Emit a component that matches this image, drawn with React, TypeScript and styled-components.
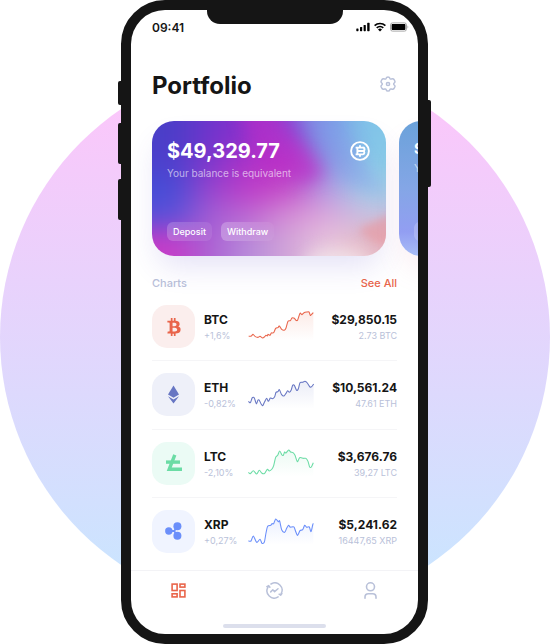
import React, { useId } from "react";
import styled, { createGlobalStyle } from "styled-components";
import { FaBtc } from "react-icons/fa";

const ink = "#151515";
const muted = "#b9c1d9";
const accent = "#e9654b";

const GlobalStyle = createGlobalStyle`
  *, *::before, *::after { box-sizing: border-box; }
  body {
    margin: 0;
    background: #fff;
    color: ${ink};
    font-family: Inter, "Liberation Sans", sans-serif;
  }
  h1, h2, p { margin: 0; }
  button {
    border: 0;
    padding: 0;
    background: none;
    color: inherit;
    font: inherit;
    cursor: pointer;
  }
`;

const Stage = styled.main`
  position: relative;
  display: flex;
  justify-content: center;
  padding-right: 1px;
  min-height: 100vh;
  overflow: hidden;
`;

const Backdrop = styled.div`
  position: absolute;
  left: 50%;
  top: 62px;
  width: 100%;
  max-width: 550px;
  aspect-ratio: 1;
  border-radius: 50%;
  transform: translateX(-50%);
  background: linear-gradient(180deg, #ffc4fa 0%, #c7e7ff 100%);
`;

const Phone = styled.div`
  position: relative;
  display: flex;
  width: 100%;
  max-width: 307px;
  border: 10px solid ${ink};
  border-radius: 44px;
  background: ${ink};
`;

const SideKey = styled.span<{ $side: "left" | "right"; $top: number; $length: number }>`
  position: absolute;
  ${(p) => p.$side}: -13px;
  top: ${(p) => p.$top}px;
  width: 4px;
  height: ${(p) => p.$length}px;
  border-radius: ${(p) => (p.$side === "left" ? "2px 0 0 2px" : "0 2px 2px 0")};
  background: ${ink};
`;

const Notch = styled.div`
  position: absolute;
  z-index: 2;
  top: -1px;
  left: 50%;
  width: 136px;
  height: 15px;
  margin-left: -68px;
  border-radius: 0 0 13px 13px;
  background: ${ink};
`;

const Screen = styled.div`
  display: flex;
  flex-direction: column;
  flex: 1;
  min-width: 0;
  overflow: hidden;
  border-radius: 34px;
  background: #fff;
`;

const StatusBar = styled.div`
  display: flex;
  align-items: center;
  justify-content: space-between;
  height: 34px;
  padding: 0 9px 0 21px;
  font-size: 12px;
  font-weight: 600;
`;

const StatusIcons = styled.div`
  display: flex;
  align-items: center;
  gap: 4px;
`;

const Header = styled.header`
  display: flex;
  align-items: center;
  justify-content: space-between;
  padding: 24px 22px 0 21px;
`;

const Title = styled.h1`
  font-size: 24px;
  line-height: 36px;
  font-weight: 700;
`;

const IconButton = styled.button`
  display: flex;
  margin-bottom: 4px;
  color: ${muted};
`;

const Cards = styled.section`
  display: flex;
  gap: 13px;
  padding: 17px 0 0 21px;
`;

const Card = styled.article<{ $shadow: string }>`
  position: relative;
  isolation: isolate;
  display: flex;
  flex: 0 0 234px;
  flex-direction: column;
  justify-content: space-between;
  min-height: 135px;
  padding: 16px 16px 15px 15px;
  border-radius: 22px;
  color: #fff;
  box-shadow: 0 16px 30px -6px ${(p) => p.$shadow};
`;

const CardArt = styled.svg`
  position: absolute;
  z-index: -1;
  inset: 0;
  width: 100%;
  height: 100%;
  border-radius: inherit;
`;

const CardTop = styled.div`
  display: flex;
  justify-content: space-between;
  align-items: flex-start;
`;

const Balance = styled.p<{ $compact?: boolean }>`
  font-size: ${(p) => (p.$compact ? 14 : 20)}px;
  line-height: ${(p) => (p.$compact ? 24 : 28)}px;
  font-weight: 700;
`;

const BalanceNote = styled.p<{ $compact?: boolean }>`
  font-size: 10px;
  line-height: ${(p) => (p.$compact ? 14 : 16)}px;
  color: rgba(255, 255, 255, 0.6);
`;

const CoinMark = styled.svg`
  flex: none;
  margin-top: 4px;
`;

const CardActions = styled.div`
  display: flex;
  gap: 9px;
`;

const Pill = styled.button<{ $strong?: boolean }>`
  height: 19px;
  padding: 0 6px;
  border-radius: 6px;
  background: ${(p) =>
    p.$strong
      ? "linear-gradient(90deg, rgba(255,255,255,0.26), rgba(255,255,255,0.04))"
      : "linear-gradient(90deg, rgba(255,255,255,0.2), rgba(255,255,255,0.08))"};
  color: #fff;
  font-size: 9px;
  font-weight: 500;
`;

const SectionHead = styled.div`
  display: flex;
  align-items: center;
  justify-content: space-between;
  padding: 19px 21px 0;
  line-height: 16px;
`;

const SectionTitle = styled.h2`
  color: ${muted};
  font-size: 11px;
  font-weight: 500;
`;

const SeeAll = styled.a`
  color: ${accent};
  font-size: 11px;
  font-weight: 500;
  text-decoration: none;
`;

const CoinList = styled.ul`
  display: grid;
  flex: 1;
  grid-auto-rows: 1fr;
  margin: 2px 21px 4px;
  padding: 0;
  list-style: none;
`;

const CoinRow = styled.li`
  display: grid;
  grid-template-columns: 43px 35px 66px 1fr;
  column-gap: 9px;
  align-items: center;
  border-bottom: 1px solid #f5f5f7;

  &:last-child {
    border-bottom-color: transparent;
  }
`;

const CoinTile = styled.span<{ $tint: string; $color: string }>`
  display: flex;
  align-items: center;
  justify-content: center;
  width: 43px;
  height: 43px;
  border-radius: 15px;
  background: ${(p) => p.$tint};
  color: ${(p) => p.$color};
`;

const CoinText = styled.div<{ $end?: boolean }>`
  white-space: nowrap;
  text-align: ${(p) => (p.$end ? "right" : "left")};
`;

const Strong = styled.p`
  font-size: 12px;
  line-height: 18px;
  font-weight: 700;
`;

const Sub = styled.p`
  color: ${muted};
  font-size: 9px;
  line-height: 13px;
`;

const Chart = styled.svg`
  display: block;
  width: 66px;
  height: 34px;
`;

const TabBar = styled.nav`
  display: grid;
  grid-template-columns: repeat(3, 1fr);
  height: 40px;
  border-top: 1px solid #f3f3f6;
`;

const Tab = styled.button<{ $active?: boolean }>`
  display: flex;
  align-items: center;
  justify-content: center;
  color: ${(p) => (p.$active ? accent : muted)};
`;

const HomeIndicator = styled.div`
  align-self: center;
  width: 103px;
  height: 4px;
  margin: 14px 0 6px;
  border-radius: 2px;
  background: #dcdfec;
`;

const SignalIcon = () => (
  <svg width="14" height="10" viewBox="0 0 14 10" aria-hidden="true">
    <rect x="0.3" y="6.4" width="2.2" height="2.8" rx="0.6" />
    <rect x="4" y="5" width="2.2" height="4.2" rx="0.6" />
    <rect x="7.6" y="3" width="2.2" height="6.2" rx="0.6" />
    <rect x="11.2" y="0.8" width="2.4" height="8.4" rx="0.6" />
  </svg>
);

const WifiIcon = () => (
  <svg width="12" height="10" viewBox="0 0 12 10" fill="none" stroke="#000" strokeWidth="1.6" aria-hidden="true">
    <path d="M0.6 3.7a7.8 7.8 0 0 1 10.8 0" />
    <path d="M2.7 5.9a4.8 4.8 0 0 1 6.6 0" />
    <path d="M6 9.4 4 7.4a2.8 2.8 0 0 1 4 0Z" fill="#000" stroke="none" />
  </svg>
);

const BatteryIcon = () => (
  <svg width="19" height="10" viewBox="0 0 19 10" aria-hidden="true">
    <rect x="0.5" y="0.9" width="16" height="8.2" rx="2" fill="none" stroke="#a8a8a8" />
    <rect x="1.6" y="1.9" width="13.8" height="6.2" rx="0.8" />
    <path d="M17.5 3.4c1 .4 1 2.8 0 3.2Z" fill="#a8a8a8" />
  </svg>
);

const GearIcon = () => (
  <svg width="16" height="16" viewBox="0 0 16 16" fill="none" stroke="currentColor" strokeWidth="1.5" strokeLinejoin="round" aria-hidden="true">
    <path d="M6.2 2.2Q6.5.9 8 .9T9.8 2.2Q10.2 3.4 11.4 3Q13.3 2.4 14 3.5L14.8 5Q15.3 6.2 14.2 7Q13.2 8 14.2 9Q15.3 9.8 14.8 11L14 12.5Q13.3 13.6 11.4 13Q10.2 12.6 9.8 13.8Q9.5 15.1 8 15.1T6.2 13.8Q5.8 12.6 4.6 13Q2.7 13.6 2 12.5L1.2 11Q.7 9.8 1.8 9Q2.8 8 1.8 7Q.7 6.2 1.2 5L2 3.5Q2.7 2.4 4.6 3Q5.8 3.4 6.2 2.2Z" />
    <circle cx="8" cy="8" r="1.6" />
  </svg>
);

const DashboardIcon = () => (
  <svg width="15" height="15" viewBox="0 0 15 15" fill="none" stroke="currentColor" strokeWidth="1.6" aria-hidden="true">
    <rect x="1.1" y="1.1" width="5" height="6.4" />
    <rect x="9" y="1.1" width="4.9" height="3" />
    <rect x="1.1" y="10.8" width="5" height="3.1" />
    <rect x="9" y="7.5" width="4.9" height="6.4" />
  </svg>
);

const ActivityIcon = () => (
  <svg width="17" height="17" viewBox="0 0 17 17" fill="none" stroke="currentColor" strokeWidth="1.5" strokeLinecap="round" strokeLinejoin="round" aria-hidden="true">
    <path d="M5 2a7.2 7.2 0 0 1 10 9.8M13.1 12.2l1.5 1 1.3-1.7" />
    <path d="M12.1 14.9A7.2 7.2 0 0 1 2 5.2M.9 4.7 2.7 3.6 3.9 5.2" />
    <path d="M4.7 9.9 6.8 7.8 8.6 9.6 12 6.7" />
  </svg>
);

const ProfileIcon = () => (
  <svg width="14" height="18" viewBox="0 0 14 18" fill="none" stroke="currentColor" strokeWidth="1.6" strokeLinecap="round" aria-hidden="true">
    <circle cx="7.5" cy="4.8" r="4" />
    <path d="M2 16.2V15a3.3 3.3 0 0 1 3.3-3.3h4.4A3.3 3.3 0 0 1 13 15v1.2" />
  </svg>
);

const EthIcon = () => (
  <svg width="13" height="19" viewBox="0 0 13 19" fill="currentColor" aria-hidden="true">
    <path d="M6.5 0.5 1 9.5 6.5 12.7 12 9.5Z" />
    <path d="M1 11.3 6.5 18.5 12 11.3 6.5 14.5Z" />
  </svg>
);

const LtcIcon = () => (
  <svg width="18" height="18" viewBox="0 0 18 18" fill="none" stroke="currentColor" strokeWidth="3.4" aria-hidden="true">
    <path d="M9.8 0.8 4.2 15.3H17" />
    <path d="M1 8.1H15" />
  </svg>
);

const XrpIcon = () => (
  <svg width="18" height="18" viewBox="0 0 18 18" fill="currentColor" aria-hidden="true">
    <circle cx="3.8" cy="9" r="3.7" />
    <circle cx="12.4" cy="4.2" r="4" />
    <circle cx="12.4" cy="13.8" r="4" />
    <path d="M3.8 9H9.2L12.4 4.2M9.2 9 12.4 13.8" fill="none" stroke="currentColor" strokeWidth="1.8" />
  </svg>
);

const CoinMarkIcon = () => (
  <CoinMark width="20" height="20" viewBox="0 0 20 20" fill="none" stroke="#fff" strokeWidth="1.9" strokeLinejoin="round" aria-hidden="true">
    <circle cx="10" cy="10" r="8.9" />
    <path d="M5.6 6.6h7a1.6 1.6 0 0 1 .5 3.3a1.8 1.8 0 0 1-.3 3.5H5.6M7.4 6.6v6.8M7.4 10h5.5" />
    <path d="M10 4.2v2.4M10 13.4v2.4" />
  </CoinMark>
);

type Point = [number, number];

const smoothPath = (points: Point[]): string =>
  points.reduce((path, [x, y], i) => {
    if (i === 0) return `M${x} ${y}`;
    const [px, py] = points[i - 1];
    const [bx, by] = points[Math.max(i - 2, 0)];
    const [nx, ny] = points[Math.min(i + 1, points.length - 1)];
    const k = 7;
    return `${path}C${px + (x - bx) / k} ${py + (y - by) / k} ${x - (nx - px) / k} ${y - (ny - py) / k} ${x} ${y}`;
  }, "");

const parsePoints = (source: string): Point[] =>
  source.split(" ").map((pair) => pair.split(",").map(Number) as Point);

interface TrendProps {
  name: string;
  series: string;
  color: string;
}

const Trend = ({ name, series, color }: TrendProps) => {
  const id = useId();
  const points = parsePoints(series);
  const line = smoothPath(points);
  const first = points[0][0];
  const last = points[points.length - 1][0];
  return (
    <Chart viewBox="0 0 198 102" role="img" aria-label={`${name} price trend`}>
      <defs>
        <linearGradient id={id} x1="0" y1="0" x2="0" y2="1">
          <stop offset="0" stopColor={color} stopOpacity="0.13" />
          <stop offset="1" stopColor={color} stopOpacity="0" />
        </linearGradient>
      </defs>
      <path d={`${line}L${last} 92L${first} 92Z`} fill={`url(#${id})`} />
      <path d={line} fill="none" stroke={color} strokeWidth="3.2" strokeLinejoin="round" />
    </Chart>
  );
};

interface Coin {
  code: string;
  change: string;
  price: string;
  amount: string;
  color: string;
  tint: string;
  icon: React.ReactNode;
  series: string;
}

const coins: Coin[] = [
  {
    code: "BTC",
    change: "+1,6%",
    price: "$29,850.15",
    amount: "2.73 BTC",
    color: "#e9654b",
    tint: "#fbeeed",
    icon: <FaBtc size={18} aria-hidden="true" />,
    series:
      "2,79 10,78 15,73 22,80 30,82 36,79 44,84 50,80 54,76 58,78 60,73 66,76 70,69 77,68 83,55 90,53 94,48 102,59 110,60 114,54 120,34 127,32 132,24 139,25 144,31 149,30 156,10 162,14 168,8 176,6 183,6 187,16 191,13 196,8",
  },
  {
    code: "ETH",
    change: "-0,82%",
    price: "$10,561.24",
    amount: "47.61 ETH",
    color: "#6776c3",
    tint: "#eef0f9",
    icon: <EthIcon />,
    series:
      "1,70 7,74 13,59 19,60 25,77 30,66 34,67 39,77 44,83 50,71 56,61 61,70 67,60 73,62 80,56 84,43 90,41 94,35 101,50 108,54 114,46 119,38 124,43 130,35 134,22 139,22 146,37 151,32 156,14 163,13 171,10 178,15 186,27 191,26 197,18",
  },
  {
    code: "LTC",
    change: "-2,10%",
    price: "$3,676.76",
    amount: "39,27 LTC",
    color: "#6bdca5",
    tint: "#ebfbf5",
    icon: <LtcIcon />,
    series:
      "1,79 7,83 16,74 26,84 34,73 42,82 50,82 58,70 64,75 72,69 77,59 83,34 89,28 95,15 102,27 106,28 110,18 114,21 122,12 128,18 135,20 141,28 148,47 155,35 166,37 174,37 180,46 185,63 190,63 196,50",
  },
  {
    code: "XRP",
    change: "+0,27%",
    price: "$5,241.62",
    amount: "16447,65 XRP",
    color: "#6b8ffa",
    tint: "#f0f4ff",
    icon: <XrpIcon />,
    series:
      "1,81 9,81 16,66 26,85 36,76 42,88 49,84 54,57 59,37 68,34 72,29 77,29 83,15 91,23 95,21 101,47 110,55 116,43 122,34 126,39 132,39 138,39 144,55 149,64 156,50 164,47 170,34 176,40 184,39 189,53 194,33 196,28",
  },
];

const meshColors = [
  ["#4a3ec8", "#7034cc", "#9030cc", "#8c44d4", "#7898e6", "#82c6e8"],
  ["#4c40cc", "#8036cc", "#b032c8", "#bc34c6", "#8c88e2", "#88cae8"],
  ["#464cd6", "#9844ce", "#be3cc8", "#c44cc8", "#b49ce2", "#a0cee8"],
  ["#5a50d8", "#a45cd4", "#be68d2", "#d48ed6", "#dca8dc", "#c8c0e0"],
  ["#c43cc8", "#aa62d4", "#b88cda", "#d2a4d8", "#e8c8de", "#e6b8c4"],
];

const cellWidth = 39;
const cellHeight = 27;

const meshCells = Array.from({ length: 9 * 10 }, (_, i) => {
  const col = (i % 10) - 2;
  const row = Math.floor(i / 10) - 2;
  const colors = meshColors[Math.min(Math.max(row, 0), 4)];
  return { x: col * cellWidth, y: row * cellHeight, fill: colors[Math.min(Math.max(col, 0), 5)] };
});

const MainCardArt = () => (
  <CardArt viewBox="0 0 234 135" preserveAspectRatio="none" aria-hidden="true">
    <defs>
      <filter id="mesh-blur" filterUnits="userSpaceOnUse" x="-60" y="-50" width="354" height="235" colorInterpolationFilters="sRGB">
        <feGaussianBlur stdDeviation="17 12" />
      </filter>
      <filter id="accent-blur" filterUnits="userSpaceOnUse" x="-60" y="-50" width="354" height="235" colorInterpolationFilters="sRGB">
        <feGaussianBlur stdDeviation="8" />
      </filter>
      <filter id="edge-blur" filterUnits="userSpaceOnUse" x="-60" y="-50" width="354" height="235" colorInterpolationFilters="sRGB">
        <feGaussianBlur stdDeviation="4" />
      </filter>
    </defs>
    <g filter="url(#mesh-blur)">
      {meshCells.map((cell) => (
        <rect
          key={`${cell.x}:${cell.y}`}
          x={cell.x}
          y={cell.y}
          width={cellWidth + 1}
          height={cellHeight + 1}
          fill={cell.fill}
        />
      ))}
    </g>
    <g filter="url(#accent-blur)">
      <path d="M88-14H120L172 54 150 62 104 40Z" fill="#bc2cc6" opacity="0.6" />
      <path d="M144-14H180L234 76 190 60Z" fill="#84a0e8" opacity="0.45" />
      <ellipse cx="186" cy="142" rx="34" ry="14" fill="#f2e6ea" opacity="0.8" />
    </g>
    <g filter="url(#edge-blur)">
      <path d="M250 88 214 104 206 110 222 122 250 128Z" fill="#e8969c" opacity="0.6" />
    </g>
  </CardArt>
);

const NextCardArt = () => (
  <CardArt viewBox="0 0 234 135" preserveAspectRatio="none" aria-hidden="true">
    <defs>
      <linearGradient id="next-card" x1="0" y1="0" x2="0" y2="1">
        <stop offset="0" stopColor="#6ba2da" />
        <stop offset="0.5" stopColor="#84a6e6" />
        <stop offset="0.82" stopColor="#929ef2" />
        <stop offset="1" stopColor="#a8bdf6" />
      </linearGradient>
    </defs>
    <rect width="234" height="135" fill="url(#next-card)" />
  </CardArt>
);

interface BalanceCardProps {
  balance: string;
  shadow: string;
  art: React.ReactNode;
  compact?: boolean;
}

const BalanceCard = ({ balance, shadow, art, compact }: BalanceCardProps) => (
  <Card $shadow={shadow}>
    {art}
    <CardTop>
      <div>
        <Balance $compact={compact}>{balance}</Balance>
        <BalanceNote $compact={compact}>Your balance is equivalent</BalanceNote>
      </div>
      <CoinMarkIcon />
    </CardTop>
    <CardActions>
      <Pill type="button">Deposit</Pill>
      <Pill type="button" $strong>
        Withdraw
      </Pill>
    </CardActions>
  </Card>
);

export default function App() {
  return (
    <>
      <GlobalStyle />
      <Stage>
        <Backdrop />
        <Phone>
          <SideKey $side="left" $top={71} $length={24} />
          <SideKey $side="left" $top={113} $length={41} />
          <SideKey $side="left" $top={169} $length={41} />
          <SideKey $side="right" $top={90} $length={87} />
          <Notch />
          <Screen>
            <StatusBar>
              <span>09:41</span>
              <StatusIcons>
                <SignalIcon />
                <WifiIcon />
                <BatteryIcon />
              </StatusIcons>
            </StatusBar>
            <Header>
              <Title>Portfolio</Title>
              <IconButton type="button" aria-label="Settings">
                <GearIcon />
              </IconButton>
            </Header>
            <Cards aria-label="Balances">
              <BalanceCard balance="$49,329.77" shadow="rgba(90, 70, 200, 0.16)" art={<MainCardArt />} />
              <BalanceCard balance="$49,329.77" shadow="rgba(220, 120, 160, 0.16)" art={<NextCardArt />} compact />
            </Cards>
            <SectionHead>
              <SectionTitle>Charts</SectionTitle>
              <SeeAll href="#charts">See All</SeeAll>
            </SectionHead>
            <CoinList id="charts">
              {coins.map((coin) => (
                <CoinRow key={coin.code}>
                  <CoinTile $tint={coin.tint} $color={coin.color}>
                    {coin.icon}
                  </CoinTile>
                  <CoinText>
                    <Strong>{coin.code}</Strong>
                    <Sub>{coin.change}</Sub>
                  </CoinText>
                  <Trend name={coin.code} series={coin.series} color={coin.color} />
                  <CoinText $end>
                    <Strong>{coin.price}</Strong>
                    <Sub>{coin.amount}</Sub>
                  </CoinText>
                </CoinRow>
              ))}
            </CoinList>
            <TabBar aria-label="Main">
              <Tab type="button" aria-label="Dashboard" $active>
                <DashboardIcon />
              </Tab>
              <Tab type="button" aria-label="Activity">
                <ActivityIcon />
              </Tab>
              <Tab type="button" aria-label="Profile">
                <ProfileIcon />
              </Tab>
            </TabBar>
            <HomeIndicator />
          </Screen>
        </Phone>
      </Stage>
    </>
  );
}
